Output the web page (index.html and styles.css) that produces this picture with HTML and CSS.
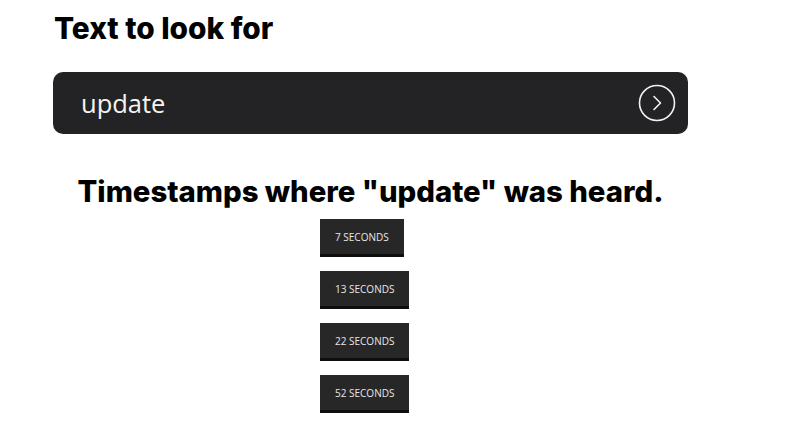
FILE: index.html
```html
<!DOCTYPE html>
<html>
<head>
<meta charset="utf-8">
<link rel="stylesheet" href="styles.css">
</head>
<body>
<main class="page">
  <h1 class="title">Text to look for</h1>
  <div class="search">
    <span class="search-text">update</span>
    <svg class="go" width="38" height="38" viewBox="0 0 38 38" aria-hidden="true">
      <circle cx="19" cy="19" r="17.5" fill="none" stroke="#f2f2f2" stroke-width="1.6"/>
      <path d="M16 12.5 L22.5 19 L16 25.5" fill="none" stroke="#f2f2f2" stroke-width="1.6" stroke-linecap="round" stroke-linejoin="round"/>
    </svg>
  </div>
  <h2 class="result-title">Timestamps where "update" was heard.</h2>
  <div class="stamps">
    <button class="stamp">7 seconds</button>
    <button class="stamp">13 seconds</button>
    <button class="stamp">22 seconds</button>
    <button class="stamp">52 seconds</button>
  </div>
</main>
</body>
</html>
```
FILE: styles.css
```css
html, body {
  margin: 0;
  padding: 0;
  background: #ffffff;
}
.page {
  width: 635px;
  margin-left: 53px;
  padding-top: 8px;
  font-family: "Open Sans", sans-serif;
}
.title {
  margin: 0 0 0 1px;
  font-family: Inter, "Noto Sans", sans-serif;
  font-weight: 800;
  font-size: 29.8px;
  line-height: 40px;
  color: #000;
}
.search {
  margin-top: 24px;
  height: 62px;
  box-sizing: border-box;
  background: #232325;
  border-radius: 10px;
  display: flex;
  align-items: center;
  justify-content: space-between;
  padding: 0 12px 0 28px;
}
.search-text {
  color: #f4f4f4;
  font-size: 25.5px;
  font-family: "Open Sans", sans-serif;
}
.go {
  display: block;
}
.result-title {
  margin: 38px 0 0 0;
  text-align: center;
  font-family: Inter, "Noto Sans", sans-serif;
  font-weight: 800;
  font-size: 29.3px;
  line-height: 40px;
  color: #000;
}
.stamps {
  display: flex;
  flex-direction: column;
  align-items: flex-start;
  gap: 14px;
  padding-left: 267px;
  margin-top: 7px;
}
.stamp {
  border: none;
  border-bottom: 3px solid #0e0e0e;
  background: #272727;
  color: #e8e8e8;
  font-family: "Open Sans", sans-serif;
  font-size: 10px;
  text-transform: uppercase;
  height: 38px;
  padding: 0 15px;
  box-sizing: border-box;
  cursor: pointer;
}
```
